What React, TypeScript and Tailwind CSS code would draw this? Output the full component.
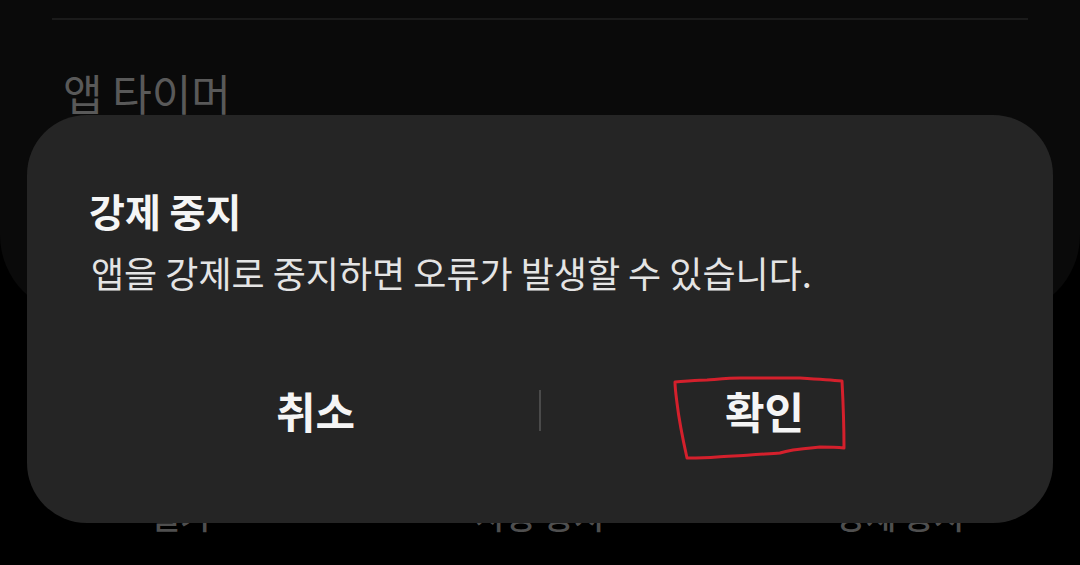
const font = { fontFamily: '"Noto Sans CJK KR", "Noto Sans", sans-serif' }

const bottomActions = ["열기", "사용 중지", "강제 중지"]

function Annotation() {
  // hand-drawn red box around the confirm button
  return (
    <svg className="pointer-events-none absolute left-0 top-0" width="1080" height="565" viewBox="0 0 1080 565">
      <path
        d="M675 382 C690 381 700 380 707 380 C720 379 730 378 740 378 C760 378 780 378 800 378 C815 379 830 380 842 381 C843 400 844 425 844 448 C835 447 827 447 820 447 C810 448 800 449 793 450 C787 451 783 452 780 453 C770 454 760 454 750 455 C740 456 728 456 717 457 C705 458 695 458 687 458 C683 440 679 420 677 403 C676 395 675 388 675 382 Z"
        fill="none"
        stroke="#d4202c"
        strokeWidth="3"
        strokeLinejoin="round"
      />
    </svg>
  )
}

export default function App() {
  return (
    <div className="relative h-[565px] w-[1080px] overflow-hidden bg-black" style={font}>
      {/* page behind the dialog */}
      <div className="h-[315px] rounded-b-[80px] bg-[#0a0a0a] pt-[18px]">
        <div className="mx-[52px] h-[2px] bg-[#1b1b1b]" />
        <div className="mt-[45px] pl-[63px] text-[43px] leading-[54px] text-[#595959]">앱 타이머</div>
      </div>
      <div className="mt-[180px] grid grid-cols-3">
        {bottomActions.map((label) => (
          <div key={label} className="text-center text-[33px] font-medium leading-[40px] text-[#4f4f4f]">
            {label}
          </div>
        ))}
      </div>

      {/* dialog */}
      <div className="absolute left-[27px] top-[115px] h-[408px] w-[1026px] rounded-[60px] bg-[#252525] pt-[73px]">
        <div className="px-[62px] text-[39px] font-bold leading-[44px] text-[#f5f5f5]">강제 중지</div>
        <div className="mt-[18px] px-[64px] text-[36px] leading-[44px] text-[#e4e4e4]">
          앱을 강제로 중지하면 오류가 발생할 수 있습니다.
        </div>
        <div className="mt-[86px] flex h-[60px] items-center px-[65px]">
          <button className="flex-1 text-center text-[43px] font-bold leading-[60px] text-[#f5f5f5]">취소</button>
          <div className="h-[41px] w-[2px] bg-[#4a4a4a]" />
          <button className="flex-1 text-center text-[43px] font-bold leading-[60px] text-[#f5f5f5]">확인</button>
        </div>
      </div>

      <Annotation />
    </div>
  )
}
